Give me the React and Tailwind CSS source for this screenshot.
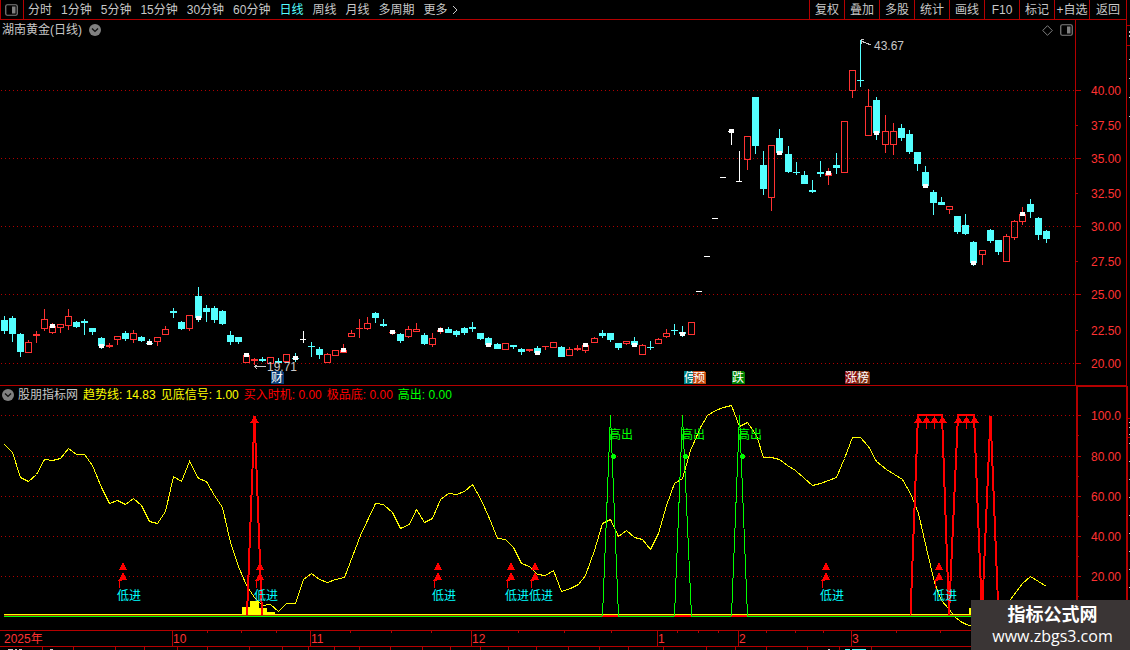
import React from "react";

const periods = ["分时", "1分钟", "5分钟", "15分钟", "30分钟", "60分钟", "日线", "周线", "月线", "多周期"];
const tools = ["复权", "叠加", "多股", "统计", "画线", "F10", "标记", "+自选"];

// [kind, high, bodyTop, bodyBottom, low, markTop]
const candles = [
  ["c", 316, 320, 331, 334], ["c", 316, 318, 334, 342], ["c", 333, 334, 352, 357], ["r", 340, 342, 353, 353],
  ["r", 331, 334, 336, 343], ["r", 309, 319, 329, 331], ["r", 323, 326, 333, 334, 324], ["r", 324, 324, 328, 333],
  ["r", 309, 316, 326, 330], ["c", 321, 322, 327, 328], ["c", 319, 321, 323, 335], ["c", 328, 328, 332, 335],
  ["c", 337, 338, 346, 349, 344], ["r", 343, 345, 347, 348], ["r", 336, 336, 340, 345], ["c", 331, 333, 339, 341],
  ["r", 330, 333, 340, 343], ["c", 336, 337, 341, 342], ["c", 339, 343, 344, 345, 341], ["r", 337, 337, 342, 346],
  ["r", 326, 329, 335, 335], ["c", 308, 311, 313, 318], ["c", 321, 322, 329, 330], ["r", 315, 315, 329, 331],
  ["c", 287, 296, 318, 322, 316], ["c", 305, 308, 312, 322], ["c", 306, 308, 320, 323], ["c", 310, 311, 324, 325],
  ["c", 331, 335, 342, 345], ["c", 337, 337, 342, 344], ["r", 355, 355, 363, 363, 353], ["r", 358, 359, 361, 365],
  ["c", 357, 359, 361, 362], ["r", 357, 357, 364, 364], ["c", 358, 361, 363, 364], ["r", 354, 354, 362, 362],
  ["c", 353, 358, 359, 362, 356], ["w", 331, 339, 340, 343], ["c", 342, 346, 347, 357], ["c", 347, 349, 355, 359],
  ["r", 353, 354, 363, 363], ["r", 350, 350, 356, 356], ["r", 344, 350, 353, 353, 348], ["r", 330, 333, 337, 337],
  ["r", 319, 328, 329, 338], ["r", 317, 323, 329, 330], ["c", 312, 313, 318, 323], ["c", 319, 324, 326, 327],
  ["r", 330, 332, 333, 335, 330], ["c", 333, 334, 341, 343], ["r", 326, 329, 337, 338], ["r", 323, 329, 332, 332],
  ["c", 333, 335, 344, 345], ["r", 333, 338, 345, 347], ["r", 327, 330, 332, 334, 328], ["c", 327, 329, 333, 333],
  ["c", 330, 331, 335, 337], ["c", 327, 328, 333, 335], ["c", 322, 327, 329, 332], ["c", 333, 333, 339, 340],
  ["c", 337, 338, 345, 345, 343], ["c", 343, 344, 349, 349], ["r", 343, 343, 350, 350], ["c", 345, 345, 347, 349],
  ["c", 348, 349, 352, 355], ["r", 349, 349, 351, 352], ["c", 346, 348, 353, 353, 351], ["r", 346, 346, 347, 350],
  ["r", 342, 342, 348, 348], ["c", 346, 347, 357, 357], ["r", 347, 349, 356, 356], ["r", 345, 348, 350, 351],
  ["r", 345, 345, 351, 353, 343], ["r", 337, 338, 343, 343], ["c", 330, 333, 336, 338], ["c", 333, 333, 340, 342],
  ["c", 343, 343, 348, 350], ["r", 341, 341, 344, 345], ["c", 337, 341, 345, 345, 343], ["r", 344, 345, 355, 355],
  ["c", 341, 347, 348, 350], ["r", 338, 339, 344, 344], ["r", 329, 333, 337, 338], ["c", 324, 330, 331, 335],
  ["c", 326, 332, 334, 337, 332], ["r", 322, 322, 335, 335], ["w", 291, 291, 292, 292], ["w", 256, 256, 257, 257],
  ["w", 218, 218, 219, 219], ["w", 177, 177, 178, 178], ["w", 130, 131, 132, 145, 129], ["w", 151, 181, 182, 182],
  ["r", 136, 136, 160, 170], ["c", 97, 97, 146, 154], ["c", 151, 165, 189, 195], ["r", 145, 145, 198, 211],
  ["c", 129, 138, 153, 155, 151], ["c", 146, 154, 172, 173], ["c", 162, 172, 173, 175], ["c", 171, 175, 184, 184],
  ["c", 180, 190, 192, 193], ["c", 161, 172, 174, 177], ["r", 168, 173, 176, 185, 171], ["c", 153, 165, 168, 174],
  ["r", 121, 121, 173, 173], ["r", 70, 70, 91, 98], ["c", 40, 80, 81, 87], ["r", 89, 106, 136, 136],
  ["c", 97, 100, 133, 140, 131], ["r", 115, 131, 145, 153], ["r", 123, 131, 145, 155], ["c", 124, 128, 138, 141],
  ["c", 130, 134, 152, 154], ["c", 152, 152, 164, 171], ["c", 166, 172, 186, 188, 184], ["c", 190, 192, 203, 215],
  ["c", 197, 202, 205, 205], ["r", 206, 206, 210, 214], ["c", 216, 216, 232, 234], ["c", 214, 225, 234, 235],
  ["c", 241, 242, 263, 266, 261], ["r", 250, 250, 255, 265], ["c", 229, 230, 241, 243], ["c", 240, 240, 252, 255],
  ["r", 234, 236, 262, 262], ["r", 220, 221, 238, 240], ["r", 207, 214, 222, 225, 212], ["c", 199, 204, 212, 218],
  ["c", 217, 218, 235, 240], ["c", 230, 231, 239, 243],
];
const candleX = (i) => Math.floor(4.04 + i * 8.0825);

const priceTicks = [["40.00", 90], ["37.50", 125], ["35.00", 158], ["32.50", 193], ["30.00", 226], ["27.50", 261], ["25.00", 294], ["22.50", 330], ["20.00", 363]];
const trendTicks = [["100.0", 415], ["80.00", 456], ["60.00", 496], ["40.00", 536], ["20.00", 576]];
const priceGrid = [90, 158, 226, 294, 363];

const trend =
  "4,444 12,452 20,477 28,481 36,474 44,459 52,460 60,458 68,448 76,454 84,454 92,465 101,487 109,503 117,500 125,504 133,498 141,505 149,521 157,523 165,511 173,476 181,481 189,461 198,478 206,481 214,495 222,507 230,542 238,566 246,585 254,597 262,605 270,604 278,611 286,603 295,603 303,579 311,573 319,579 327,582 335,579 344,577 360,535 375,503 383,504 392,512 400,528 409,524 416,509 424,522 432,518 440,499 448,493 456,494 464,491 472,484 480,498 489,518 497,538 505,539 513,547 521,563 529,566 537,574 545,575 553,570 561,591 570,588 578,584 585,575 594,550 602,523 610,519 618,536 626,530 634,537 642,539 650,549 658,533 666,505 674,483 682,478 690,450 700,427 707,415 715,410 723,407 731,405 739,426 747,422 756,435 763,457 771,457 779,459 787,465 795,470 804,478 812,485 820,483 828,480 836,477 844,458 852,437 860,437 868,446 876,461 886,469 894,474 902,479 910,493 918,513 926,548 934,582 941,600 948,608 954,616 960,621 966,624 972,626 982,622 990,616 1000,609 1010,599 1022,583 1030,576 1046,586";

const lowSignals = [123, 260, 438, 511, 535, 826, 939];
const highSignals = [[602, 610, 618], [674, 682, 691], [731, 739, 747]];
const arrows = [[254, 0], [918, 0], [926, 1], [934, 1], [942, 0], [958, 0], [966, 1], [974, 0]];
const months = [["10", 172], ["11", 310], ["12", 471], ["1", 657], ["2", 738], ["3", 851]];
const dateTicks = [207, 241, 276, 350, 391, 431, 518, 564, 611, 677, 698, 718, 766, 795, 823, 896, 940];
const footTicks = [42, 73, 115, 144, 177, 207, 249, 282, 308, 334, 359, 390, 422, 450, 480, 508, 536, 568, 599, 628, 663, 706, 735, 766, 807, 839, 871];
const tags = [
  ["财", 271, 371, "#073a73"],
  ["停", 684, 371, "#008080"],
  ["预", 693, 371, "#c2480c"],
  ["跌", 732, 371, "#008000"],
  ["涨", 845, 371, "#8a0f0f"],
  ["榜", 857, 371, "#7c2d12"],
];

function PanelIcon({ className }) {
  return (
    <svg className={className} width="13" height="12" viewBox="0 0 13 12" fill="none" aria-hidden="true">
      <rect x="0.75" y="0.75" width="11.5" height="10.5" rx="1.5" stroke="currentColor" strokeWidth="1.2" />
      <rect x="7" y="2.5" width="3.5" height="7" fill="currentColor" />
    </svg>
  );
}

function DropIcon() {
  return (
    <svg width="12" height="12" viewBox="0 0 12 12" aria-hidden="true">
      <circle cx="6" cy="6" r="6" fill="#808080" />
      <path d="M3 4.6 6 7.4 9 4.6" fill="none" stroke="#101010" strokeWidth="1.4" />
    </svg>
  );
}

function Grid({ rows, end }) {
  return rows.map((y) => (
    <line key={y} x1="1" x2={end} y1={y + 0.5} y2={y + 0.5} stroke="#b00000" strokeDasharray="1 3" />
  ));
}

function Candle({ x, data }) {
  const [kind, high, top, bottom, low, mark] = data;
  const color = kind === "c" ? "#54ffff" : kind === "r" ? "#ff3232" : "#ffffff";
  const h = bottom - top;
  const hollow = kind === "r" && h > 2;
  return (
    <g fill={color}>
      {top > high && <rect x={x} y={high} width="1" height={top - high} />}
      {low > bottom && <rect x={x} y={bottom} width="1" height={low - bottom} />}
      {hollow ? (
        <rect x={x - 2.5} y={top + 0.5} width="6" height={h - 1} fill="none" stroke={color} />
      ) : (
        <rect x={x - 3} y={top} width={kind === "w" ? 6 : 7} height={h} />
      )}
      {mark && <rect x={x - 2} y={mark} width="5" height="4" fill="#ffffff" />}
    </g>
  );
}

function PriceChart() {
  return (
    <svg className="col-start-1 row-start-1 h-[365px] w-full" viewBox="0 20 1075 365" preserveAspectRatio="none" shapeRendering="crispEdges" fontSize="12" role="img" aria-label="日线">
      <Grid rows={priceGrid} end="1075" />
      {candles.map((c, i) => (
        <Candle key={i} x={candleX(i)} data={c} />
      ))}
      <g fill="none" stroke="#c8c8c8">
        <path d="M254 366.5H266M257.5 364.5 254.5 366.5 257.5 369.5" />
        <path d="M861 41 871 45M864 39.5H861V44" />
      </g>
      <text x="267" y="371" fill="#c8c8c8">19.71</text>
      <text x="874" y="50" fill="#c8c8c8">43.67</text>
      {tags.map(([label, x, y, bg]) => (
        <g key={label}>
          <path d={`M${x} ${y}h11l2 2v11h-13z`} fill={bg} />
          <text x={x} y={y + 11} fill="#ffffff">{label}</text>
        </g>
      ))}
    </svg>
  );
}

function TrendChart() {
  return (
    <svg className="col-start-1 row-start-1 h-[244px] w-full" viewBox="0 386 1076 244" preserveAspectRatio="none" shapeRendering="crispEdges" fontSize="12" role="img" aria-label="趋势线">
      <Grid rows={[415, 456, 496, 536, 576]} end="1076" />
      <polyline points={trend} fill="none" stroke="#ffff00" transform="translate(0.5 0.5)" />
      <rect x="4" y="614" width="1042" height="1" fill="#ffff00" />
      <rect x="4" y="615" width="1042" height="1" fill="#a03000" />
      <rect x="4" y="616" width="1042" height="1" fill="#00ff00" />
      <path d="M242 614v-7h8v-6h9v7h8v4h8v2zM969 608h5v6h-5z" fill="#ffff00" />
      <g fill="none" stroke="#ff0000" strokeWidth="2">
        <path d="M247 615 254.5 416 262 615" />
        <path d="M910.5 615 918 415H942L949 615 958 415H974L982 615 990.5 416 998.5 615" />
      </g>
      {highSignals.map(([a, b, c]) => (
        <g key={a}>
          <path d={`M${a} 616h${c - a}`} stroke="#ff0000" strokeWidth="2" />
          <path d={`M${a + 0.5} 616 ${b + 0.5} 415 ${c + 0.5} 616`} fill="none" stroke="#00ff00" />
          <circle cx={b + 3.5} cy="456.5" r="2.5" fill="#00ff00" />
          <text x={b - 1} y="439" fill="#00ff00">高出</text>
        </g>
      ))}
      {arrows.map(([x, stem]) => (
        <g key={x} fill="#ff0000">
          <path d={`M${x + 0.5} 416 ${x + 5} 423H${x - 4}z`} />
          {stem === 1 && <rect x={x} y="422" width="1" height="7" />}
        </g>
      ))}
      {lowSignals.map((x) => (
        <g key={x} fill="#ff0000">
          <path d={`M${x} 562 ${x + 4} 570H${x - 4}zM${x} 572 ${x + 4} 580H${x - 4}z`} />
          <path d={`M${x - 4} 579h1v9h-1zM${x - 5} 580h4v1h-4z`} />
          <text x={x - 6} y="600" fill="#00ffff">低进</text>
        </g>
      ))}
    </svg>
  );
}

function PriceAxis() {
  return (
    <svg className="h-[365px] w-[51px] shrink-0" viewBox="0 20 51 365" shapeRendering="crispEdges" fontSize="12" fill="#ff3232">
      <rect x="0" y="20" width="1" height="365" fill="#b40000" />
      {priceTicks.map(([label, y], i) => (
        <g key={label}>
          <rect x="1" y={y} width={i % 2 ? 2 : 5} height="1" fill="#b40000" />
          <text x="46" y={y + 5} textAnchor="end">{label}</text>
        </g>
      ))}
    </svg>
  );
}

function TrendAxis() {
  return (
    <svg className="h-[244px] w-[50px] shrink-0" viewBox="0 386 50 244" shapeRendering="crispEdges" fontSize="12" fill="#ff3232">
      <rect x="0" y="386" width="2" height="244" fill="#b40000" />
      <rect x="0" y="386" width="50" height="1" fill="#b40000" />
      {trendTicks.map(([label, y]) => (
        <g key={label}>
          <rect x="2" y={y} width="3" height="1" fill="#b40000" />
          <rect x="2" y={y + 20} width="1" height="1" fill="#b40000" />
          <text x="45" y={y + 5} textAnchor="end">{label}</text>
        </g>
      ))}
    </svg>
  );
}

function DateAxis() {
  return (
    <svg className="block h-5 w-full" viewBox="0 630 1126 20" preserveAspectRatio="none" shapeRendering="crispEdges" fontSize="12" fill="#ff3232">
      <path d="M0 630h1126v1H0zM0 646h1126v1H0z" fill="#b40000" />
      <text x="4" y="643">2025年</text>
      {months.map(([label, x]) => (
        <g key={label}>
          <rect x={x} y="631" width="1" height="15" fill="#b40000" />
          <text x={x + 1} y="643">{label}</text>
        </g>
      ))}
      {dateTicks.map((x) => (
        <rect key={x} x={x} y="631" width="1" height="2" fill="#b40000" />
      ))}
      {footTicks.map((x) => (
        <rect key={x} x={x} y="647" width="1" height="3" fill="#b40000" />
      ))}
      <path d="M8 649h5v1H8zM15 649h2v1h-2zM19 649h3v1h-3zM50 649h3v1h-3zM828 649h2v1h-2z" fill="#c8c8c8" />
      <path d="M845 649h5v1h-5zM852 649h14v1h-14z" fill="#54ffff" />
    </svg>
  );
}

export default function App() {
  return (
    <div className="relative flex min-h-screen overflow-hidden bg-black text-[12px] leading-[18px] text-[#c8c8c8] [font-family:'Liberation_Sans','Noto_Sans_CJK_SC',sans-serif]">
      <main className="min-w-0 flex-1">
        <header className="flex h-5 justify-between border-b border-[#b40000] whitespace-nowrap">
          <nav className="flex items-center gap-1" aria-label="周期">
            <button className="flex h-full w-6 items-center border-x border-[#b40000] pl-1 text-[#808080]" aria-label="面板">
              <PanelIcon />
            </button>
            <div className="flex items-center gap-[9px]">
              {periods.map((p) => (
                <button key={p} className={p === "日线" ? "text-[#54ffff]" : ""}>{p}</button>
              ))}
              <button className="flex items-center gap-1">
                更多
                <svg width="6" height="10" viewBox="0 0 6 10" fill="none" stroke="currentColor" aria-hidden="true">
                  <path d="M1 1 5 5 1 9" />
                </svg>
              </button>
            </div>
          </nav>
          <nav className="flex" aria-label="工具">
            {tools.map((t) => (
              <button key={t} className="w-[35px] border-l border-[#b40000] text-center">{t}</button>
            ))}
            <button className="w-[37px] border-l border-[#b40000] text-center">返回</button>
          </nav>
        </header>

        <section className="flex border-b border-[#b40000]">
          <div className="grid min-w-0 flex-1">
            <PriceChart />
            <div className="z-10 col-start-1 row-start-1 flex h-5 items-center justify-between pr-0.5 pl-0.5">
              <h1 className="flex items-center gap-[7px]">
                湖南黄金(日线)
                <button aria-label="展开"><DropIcon /></button>
              </h1>
              <div className="flex items-center gap-[7px] text-[#808080]">
                <svg width="11" height="11" viewBox="0 0 11 11" fill="none" stroke="currentColor" aria-hidden="true">
                  <path d="M5.5 0.7 10.3 5.5 5.5 10.3 0.7 5.5z" />
                </svg>
                <button aria-label="侧栏"><PanelIcon /></button>
              </div>
            </div>
          </div>
          <PriceAxis />
        </section>

        <section className="flex">
          <div className="grid min-w-0 flex-1">
            <TrendChart />
            <div className="z-10 col-start-1 row-start-1 flex h-[18px] items-center gap-[5px] pl-0.5 whitespace-nowrap">
              <button className="-mr-px" aria-label="指标"><DropIcon /></button>
              <span>股朋指标网</span>
              <span className="text-[#ffff00]">趋势线: 14.83</span>
              <span className="text-[#ffff00]">见底信号: 1.00</span>
              <span className="text-[#ff0000]">买入时机: 0.00</span>
              <span className="text-[#ff0000]">极品底: 0.00</span>
              <span className="text-[#00ff00]">高出: 0.00</span>
            </div>
          </div>
          <TrendAxis />
        </section>
        <DateAxis />
      </main>

      <svg className="h-[650px] w-1 shrink-0" viewBox="0 0 4 650" shapeRendering="crispEdges" aria-hidden="true">
        <rect width="1" height="650" fill="#b40000" />
        <rect y="386" width="2" height="264" fill="#b40000" />
        <path d="M1 25h3v1H1zM1 45h3v1H1zM1 418h3v1H1zM1 437h3v1H1z" fill="#b40000" />
        <path d="M3 31h1v2H3zM3 35h1v2H3zM3 59h1v1H3zM3 78h1v1H3zM3 97h1v1H3zM3 116h1v1H3zM3 422h1v1H3zM3 427h1v1H3zM3 434h1v1H3zM3 443h1v1H3zM3 461h1v1H3zM3 479h1v1H3zM3 497h1v1H3zM3 515h1v1H3zM3 533h1v1H3zM3 551h1v1H3zM3 569h1v1H3zM3 587h1v1H3z" fill="#c8c8c8" />
      </svg>

      <a href="http://www.zbgs3.com" className="absolute right-0 bottom-0 z-20 flex h-[50px] w-[159px] flex-col items-center justify-center bg-[#3a3535] pl-1 text-white">
        <span className="text-[18px] leading-[22px] font-bold">指标公式网</span>
        <span className="text-[16px] leading-5 [font-family:'Open_Sans',sans-serif]">www.zbgs3.com</span>
      </a>
    </div>
  );
}
